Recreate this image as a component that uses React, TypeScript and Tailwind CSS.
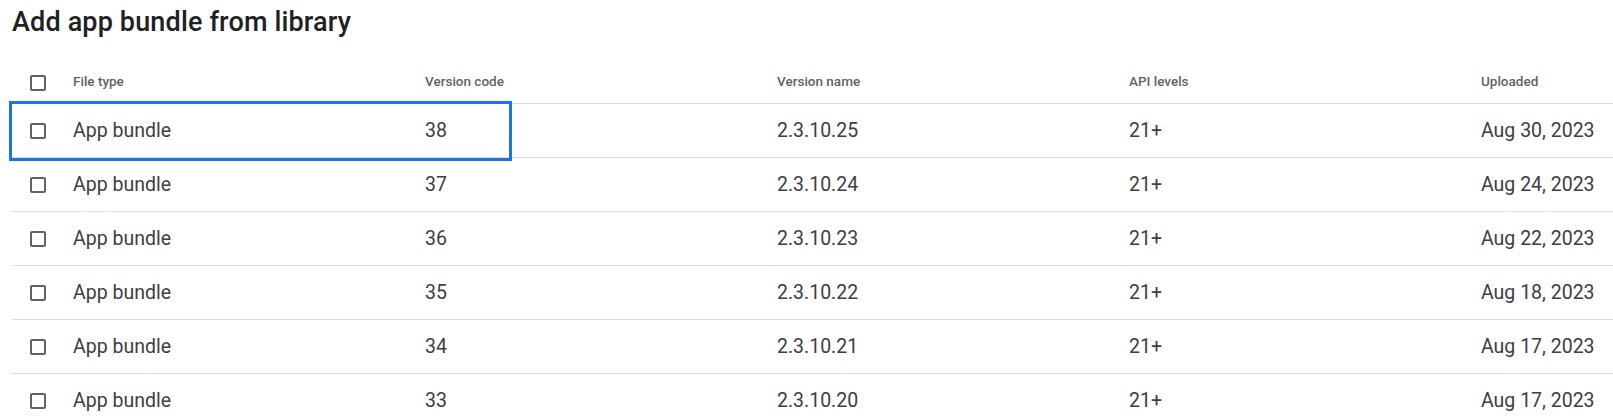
import React from "react"

interface Bundle {
  code: number
  name: string
  api: string
  uploaded: string
}

const bundles: Bundle[] = [
  { code: 38, name: "2.3.10.25", api: "21+", uploaded: "Aug 30, 2023" },
  { code: 37, name: "2.3.10.24", api: "21+", uploaded: "Aug 24, 2023" },
  { code: 36, name: "2.3.10.23", api: "21+", uploaded: "Aug 22, 2023" },
  { code: 35, name: "2.3.10.22", api: "21+", uploaded: "Aug 18, 2023" },
  { code: 34, name: "2.3.10.21", api: "21+", uploaded: "Aug 17, 2023" },
  { code: 33, name: "2.3.10.20", api: "21+", uploaded: "Aug 17, 2023" },
]

const cols = "grid grid-cols-[61px_352px_352px_352px_352px_1fr] items-center"

function Checkbox({ className = "" }: { className?: string }) {
  return (
    <div className={`ml-[18px] h-4 w-4 rounded-[2px] border-2 border-[#5f6368] bg-white ${className}`} />
  )
}

export default function App() {
  return (
    <div className="h-[418px] w-full overflow-hidden bg-white font-['Roboto',sans-serif]">
      <div className="h-[50px] pl-[12px] pt-[9px]">
        <h1 className="text-[27px] font-medium leading-none tracking-[0.15px] text-[#202124]">
          Add app bundle from library
        </h1>
      </div>

      <div className="ml-[12px]">
        {/* Header */}
        <div className={`${cols} h-[54px] border-b border-[#dadce0] pt-[9px]`}>
          <Checkbox className="mt-[4px]" />
          <span className="text-[13.5px] font-medium text-[#5f6368]">File type</span>
          <span className="text-[13.5px] font-medium text-[#5f6368]">Version code</span>
          <span className="text-[13.5px] font-medium text-[#5f6368]">Version name</span>
          <span className="text-[13.5px] font-medium text-[#5f6368]">API levels</span>
          <span className="text-[13.5px] font-medium text-[#5f6368]">Uploaded</span>
        </div>

        {/* Rows */}
        {bundles.map((b, i) => (
          <div
            key={b.code}
            className={`${cols} relative h-[54px] border-b border-[#dadce0] text-[19.5px] text-[#3c4043]`}
          >
            {i === 0 && (
              <div className="pointer-events-none absolute left-[-3px] top-[-3px] h-[60px] w-[503px] border-[3px] border-[#1a73e8]" />
            )}
            <Checkbox />
            <span>App bundle</span>
            <span>{b.code}</span>
            <span>{b.name}</span>
            <span>{b.api}</span>
            <span>{b.uploaded}</span>
          </div>
        ))}
      </div>
    </div>
  )
}
